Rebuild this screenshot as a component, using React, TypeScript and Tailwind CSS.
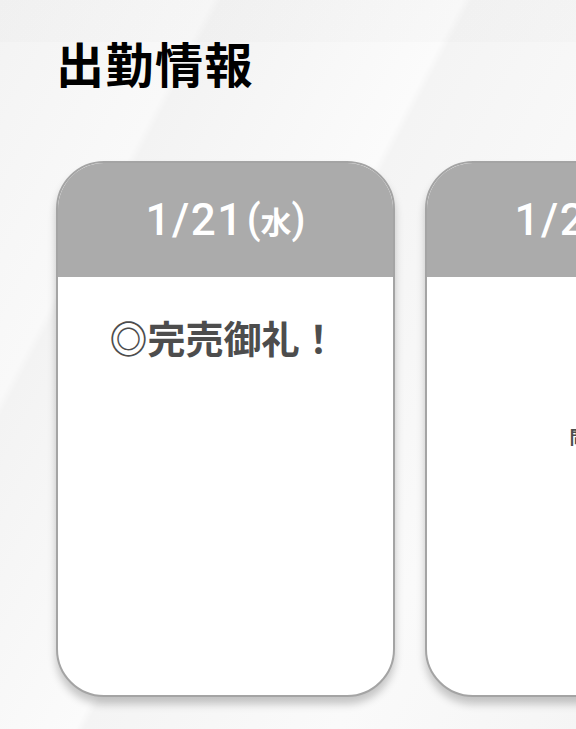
const days = [
  { date: "1/21", week: "水", text: "◎完売御礼！", extra: "" },
  { date: "1/22", week: "木", text: "", extra: "問合せ" },
];

const DayCard = ({
  date,
  week,
  text,
  extra,
}: {
  date: string;
  week: string;
  text: string;
  extra: string;
}) => {
  return (
    <div className="flex h-[536px] w-[339px] shrink-0 flex-col overflow-hidden rounded-[48px] border-2 border-[#a4a4a4] bg-white shadow-[0_7px_9px_rgba(0,0,0,0.22)]">
      <div className="flex h-[114px] shrink-0 items-center justify-center bg-[#ababab] text-white">
        <span className="font-['Roboto'] text-[44px] leading-none font-medium tracking-[1.5px]">
          {date}
        </span>
        <span className="ml-[3px] flex items-center leading-none">
          <span className="font-['Roboto'] text-[40px] font-medium">(</span>
          <span className="text-[31px] font-bold">{week}</span>
          <span className="font-['Roboto'] text-[40px] font-medium">)</span>
        </span>
      </div>
      <div className="flex flex-1 flex-col items-center">
        {text ? (
          <p className="pt-[41px] pr-[4px] text-[38px] leading-none font-bold text-[#4d4d4d]">
            {text}
          </p>
        ) : (
          <p className="pt-[150px] pl-[4px] text-[18px] leading-none font-bold text-[#4d4d4d]">
            {extra}
          </p>
        )}
      </div>
    </div>
  );
};

export default function App() {
  return (
    <div
      className="h-[729px] w-[576px] overflow-hidden bg-[linear-gradient(to_bottom,rgba(0,0,0,0.012)_0px,rgba(0,0,0,0.012)_42px,transparent_42px),linear-gradient(118deg,#f3f3f3_0%,#f9f9f9_22%,#f3f3f3_23%,#fbfbfb_48%,#f4f4f4_49%,#fafafa_75%,#f5f5f5_100%)] pl-[56px]"
      style={{ fontFamily: '"Noto Sans CJK JP", "Noto Sans", sans-serif' }}
    >
      <h2 className="pt-[38px] text-[48px] leading-none font-bold tracking-[1.5px] text-black">
        出勤情報
      </h2>
      <div className="mt-[75px] flex gap-[30px]">
        {days.map((d) => (
          <DayCard key={d.date} {...d} />
        ))}
      </div>
    </div>
  );
}
